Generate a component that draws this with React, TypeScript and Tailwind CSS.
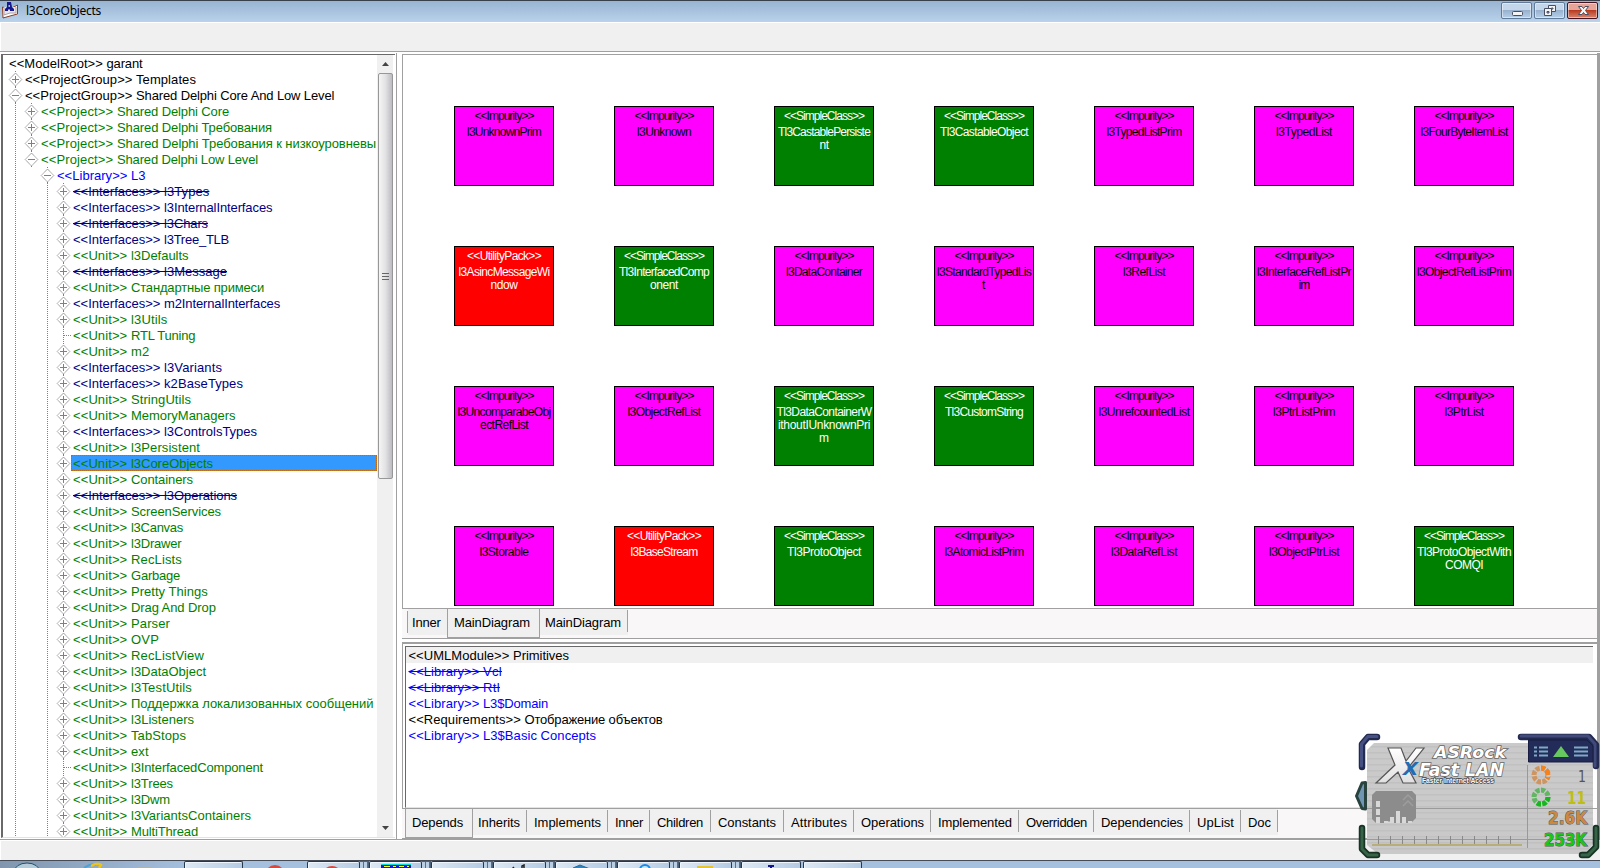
import React from "react";

type Kind = "black" | "green" | "blue" | "navy";
type Node = {
  level: number;
  kind: Kind;
  stereo: string;
  stereoWidth: number;
  name: string;
  width: number;
  icon?: "plus" | "minus" | "leaf";
  struck?: boolean;
  selected?: boolean;
};

const UI_FONT = "13px 'Liberation Sans'";
const measure = document.createElement("canvas").getContext("2d")!;

function Fit({ text, width, font = UI_FONT, className = "" }: { text: string; width: number; font?: string; className?: string }) {
  measure.font = font;
  const spacing = (width - measure.measureText(text).width) / text.length;
  return (
    <span className={"inline-block whitespace-pre align-top " + className} style={{ width, letterSpacing: spacing }}>
      {text}
    </span>
  );
}

const COLORS: Record<Kind, string> = {
  black: "text-black",
  green: "text-[#008000]",
  blue: "text-[#0000ff]",
  navy: "text-[#000080]",
};

const unit = (name: string, width: number, icon: "plus" | "leaf" = "plus", selected = false): Node => ({
  level: 4, kind: "green", stereo: "<<Unit>> ", stereoWidth: 58, name, width: width + 1, icon, selected,
});
const iface = (name: string, width: number, struck = false): Node => ({
  level: 4, kind: "navy", stereo: "<<Interfaces>> ", stereoWidth: 91, name, width: width + 1, icon: "plus", struck,
});
const project = (name: string, width: number, icon: "plus" | "minus" = "plus"): Node => ({
  level: 2, kind: "green", stereo: "<<Project>> ", stereoWidth: 76, name, width: width + 1, icon,
});
const group = (name: string, width: number, icon: "plus" | "minus"): Node => ({
  level: 1, kind: "black", stereo: "<<ProjectGroup>> ", stereoWidth: 111, name, width: width + 1, icon,
});

const TREE: Node[] = [
  { level: 0, kind: "black", stereo: "<<ModelRoot>> ", stereoWidth: 97.5, name: "garant", width: 36 },
  group("Templates", 59, "plus"),
  group("Shared Delphi Core And Low Level", 198, "minus"),
  project("Shared Delphi Core", 111),
  project("Shared Delphi Требования", 154),
  project("Shared Delphi Требования к низкоуровневы", 258),
  project("Shared Delphi Low Level", 140, "minus"),
  { level: 3, kind: "blue", stereo: "<<Library>> ", stereoWidth: 74, name: "L3", width: 14.5, icon: "minus" },
  iface("l3Types", 44.4, true),
  iface("l3InternalInterfaces", 107.4),
  iface("l3Chars", 43, true),
  iface("l3Tree_TLB", 64),
  unit("l3Defaults", 56.5),
  iface("l3Message", 62, true),
  unit("Стандартные примеси", 132),
  iface("m2InternalInterfaces", 115),
  unit("l3Utils", 35.5),
  unit("RTL Tuning", 64, "leaf"),
  unit("m2", 17.5),
  iface("l3Variants", 57),
  iface("k2BaseTypes", 78),
  unit("StringUtils", 59),
  unit("MemoryManagers", 103.5),
  iface("l3ControlsTypes", 92),
  unit("l3Persistent", 68),
  unit("l3CoreObjects", 81, "plus", true),
  unit("Containers", 61),
  iface("l3Operations", 72, true),
  unit("ScreenServices", 89),
  unit("l3Canvas", 51),
  unit("l3Drawer", 49.5),
  unit("RecLists", 50),
  unit("Garbage", 48),
  unit("Pretty Things", 76),
  unit("Drag And Drop", 84.5),
  unit("Parser", 38),
  unit("OVP", 27),
  unit("RecListView", 72),
  unit("l3DataObject", 74),
  unit("l3TestUtils", 60),
  unit("Поддержка локализованных сообщений", 241.5),
  unit("l3Listeners", 62),
  unit("TabStops", 54),
  unit("ext", 16.7),
  unit("l3InterfacedComponent", 131, "leaf"),
  unit("l3Trees", 41),
  unit("l3Dwm", 38),
  unit("l3VariantsContainers", 119),
  unit("MultiThread", 66),
];

type Shape = "I" | "S" | "U";
type Line = [string, number];
const BOXES: [Shape, ...Line[]][] = [
  ["I", ["l3UnknownPrim", 74]], ["I", ["l3Unknown", 54]], ["S", ["Tl3CastablePersiste", 92], ["nt", 9]], ["S", ["Tl3CastableObject", 88]],
  ["I", ["l3TypedListPrim", 75]], ["I", ["l3TypedList", 56]], ["I", ["l3FourByteItemList", 87]],
  ["U", ["l3AsincMessageWi", 91], ["ndow", 27]], ["S", ["Tl3InterfacedComp", 90], ["onent", 28]], ["I", ["l3DataContainer", 76]],
  ["I", ["l3StandardTypedLis", 94], ["t", 4]], ["I", ["l3RefList", 42]], ["I", ["l3InterfaceRefListPr", 94], ["im", 11]], ["I", ["l3ObjectRefListPrim", 94]],
  ["I", ["l3UncomparabeObj", 93], ["ectRefList", 48]], ["I", ["l3ObjectRefList", 73]],
  ["S", ["Tl3DataContainerW", 95], ["ithoutIUnknownPri", 92], ["m", 10]], ["S", ["Tl3CustomString", 78]],
  ["I", ["l3UnrefcountedList", 91]], ["I", ["l3PtrListPrim", 62]], ["I", ["l3PtrList", 39]],
  ["I", ["l3Storable", 49]], ["U", ["l3BaseStream", 67]], ["S", ["Tl3ProtoObject", 74]], ["I", ["l3AtomicListPrim", 79]],
  ["I", ["l3DataRefList", 66]], ["I", ["l3ObjectPtrList", 70]], ["S", ["Tl3ProtoObjectWith", 94], ["COMQI", 38]],
];
const SHAPES: Record<Shape, { label: string; width: number; cls: string }> = {
  I: { label: "<<Impurity>>", width: 59, cls: "bg-[#ff00ff] text-black" },
  S: { label: "<<SimpleClass>>", width: 80, cls: "bg-[#008000] text-white" },
  U: { label: "<<UtilityPack>>", width: 74, cls: "bg-[#ff0000] text-white" },
};
const BOX_FONT = "12px 'Liberation Sans'";

function Guide({ on }: { on: boolean }) {
  return (
    <svg width="16" height="16" className="shrink-0" shapeRendering="crispEdges">
      {on && <path d="M7.5 0V16" stroke="#808080" strokeDasharray="1 1" />}
    </svg>
  );
}

function Knob({ kind }: { kind: "plus" | "minus" | "leaf" }) {
  return (
    <svg width="16" height="16" className="shrink-0">
      {kind === "leaf" ? (
        <path d="M7.5 0V16M8 8.5H15" stroke="#808080" strokeDasharray="1 1" shapeRendering="crispEdges" />
      ) : (
        <>
          <path d="M7.5 0V2M7.5 15V16" stroke="#808080" strokeDasharray="1 1" />
          <path d="M7.5 2L13.8 8.5L7.5 15L1.2 8.5Z" fill="#fff" stroke="#777" strokeWidth="0.9" strokeDasharray="1.1 0.5" />
          <path d={kind === "plus" ? "M4 8.5H11M7.5 5V12" : "M4 8.5H11"} stroke="#808080" shapeRendering="crispEdges" />
        </>
      )}
    </svg>
  );
}

function TreeRow({ node }: { node: Node }) {
  const guides = node.level > 1 ? Array.from({ length: node.level - 1 }, (_, i) => i) : [];
  const strike = node.struck ? "line-through" : "";
  return (
    <div className="flex h-4 shrink-0 pl-[5px]">
      {guides.map((i) => (
        <Guide key={i} on={i !== 1} />
      ))}
      {node.icon && <Knob kind={node.icon} />}
      <div
        className={
          "h-4 flex-1 whitespace-pre " +
          COLORS[node.kind] +
          (node.selected ? " -ml-px border border-dotted border-[#cc6600] bg-[#3399ff] bg-clip-border pl-px leading-4" : " pl-px leading-[18px]")
        }
      >
        <Fit text={node.stereo} width={node.stereoWidth} className={strike} />
        <Fit text={node.name} width={node.width} className={strike} />
      </div>
    </div>
  );
}

type TabProps = { label: string; text: number; width: string; pad?: string; active?: boolean; divider?: boolean };
function Tab({ label, text, width, pad = "pl-[7px]", active = false, divider = true }: TabProps) {
  if (active)
    return (
      <div className={"flex h-[29px] shrink-0 items-center border border-t-0 border-[#a0a0a0] bg-[#f0f0f0] pb-px pl-1.5 " + width}>
        <Fit text={label} width={text} />
      </div>
    );
  return (
    <div className={"flex h-[26px] shrink-0 items-center justify-between bg-[#f0f0f0] pt-0.5 " + width + " " + pad}>
      <Fit text={label} width={text} />
      {divider && <span className="-mt-1 h-[22px] w-px shrink-0 bg-[#a0a0a0]" />}
    </div>
  );
}

const LOWER: TabProps[] = [
  { label: "Inherits", text: 42, width: "w-[54px]", pad: "pl-[5px]" },
  { label: "Implements", text: 67, width: "w-[81px]" },
  { label: "Inner", text: 28, width: "w-[42px]" },
  { label: "Children", text: 46, width: "w-[61px]" },
  { label: "Constants", text: 58, width: "w-[73px]" },
  { label: "Attributes", text: 56, width: "w-[70px]" },
  { label: "Operations", text: 63, width: "w-[77px]" },
  { label: "Implemented", text: 74, width: "w-[88px]" },
  { label: "Overridden", text: 61, width: "w-[75px]" },
  { label: "Dependencies", text: 82, width: "w-[96px]" },
  { label: "UpList", text: 37, width: "w-[51px]" },
  { label: "Doc", text: 23, width: "w-[37px]" },
];

const RELATIONS: { stereo: string; sw: number; name: string; w: number; cls: string; strike?: string }[] = [
  { stereo: "<<UMLModule>> ", sw: 104.5, name: "Primitives", w: 56, cls: "bg-[#f0f0f0]" },
  { stereo: "<<Library>> ", sw: 74.5, name: "Vcl", w: 19, cls: "text-[#0000ff]", strike: "line-through" },
  { stereo: "<<Library>> ", sw: 74.5, name: "Rtl", w: 17, cls: "text-[#0000ff]", strike: "line-through" },
  { stereo: "<<Library>> ", sw: 74.5, name: "L3$Domain", w: 65, cls: "text-[#0000ff]" },
  { stereo: "<<Requirements>> ", sw: 116, name: "Отображение объектов", w: 138, cls: "" },
  { stereo: "<<Library>> ", sw: 74.5, name: "L3$Basic Concepts", w: 113, cls: "text-[#0000ff]" },
];

function TitleButton({ kind }: { kind: "min" | "restore" | "close" }) {
  const red = kind === "close";
  return (
    <div
      className={
        "flex h-[17px] w-[31px] items-center justify-center rounded-[2px] border shadow-[inset_0_0_0_1px_rgba(255,255,255,0.45)] " +
        (red
          ? "border-[#431422] bg-linear-to-b from-[#e6a598] from-50% via-[#b83a20] via-50% to-[#d8836c]"
          : "border-[#5f7a9b] bg-linear-to-b from-[#c3d6ea] from-50% via-[#97b1cf] via-50% to-[#b7d0e9]")
      }
    >
      <svg width="16" height="15" viewBox="0 0 16 15" fill="#f4f4f4" stroke="#484f62">
        {kind === "min" && <rect x="3.5" y="8.5" width="10" height="4" rx="1" />}
        {kind === "restore" && (
          <>
            <path fillRule="evenodd" d="M6.5 2.5h7v6h-7zM9.5 5h1.500v1h-1.500z" />
            <path fillRule="evenodd" d="M2.500 5.500h7v7h-7zM5 8.500h2v1.500h-2z" />
          </>
        )}
        {kind === "close" && <path d="M3.500 3.500h3.500l1.500 2 1.500-2h3.500l-3 4 3 4h-3.500l-1.500-2-1.500 2h-3.500l3-4z" />}
      </svg>
    </div>
  );
}

function Ring({ cy, base, bright, from }: { cy: number; base: string; bright: string; from: number }) {
  return (
    <g fill="none" strokeWidth="5" transform={`rotate(${from} 191 ${cy})`}>
      <circle cx="191" cy={cy} r="7" stroke={base} pathLength="80" strokeDasharray="7.5 2.5" />
      <circle cx="191" cy={cy} r="7" stroke={bright} pathLength="80" strokeDasharray="7.5 2.5 7.5 2.5 7.5 52.5" />
    </g>
  );
}

function Widget() {
  return (
    <svg className="absolute left-[1350px] top-[730px]" width="250" height="134" viewBox="0 0 250 134">
      <defs>
        <pattern id="lines" width="4" height="6" patternUnits="userSpaceOnUse">
          <rect width="4" height="6" fill="#c8c8c8" />
          <rect y="4" width="4" height="1.500" fill="#bfbfbf" />
        </pattern>
        <linearGradient id="x" x1="0" y1="0" x2="0" y2="1">
          <stop offset="0" stopColor="#fff" />
          <stop offset="1" stopColor="#e0e0e0" />
        </linearGradient>
      </defs>
      <path d="M24 13H232L243 22V114L235 124H28L17 115V20Z" fill="url(#lines)" opacity="0.97" />
      <path d="M17 78.500H243M17 109.500H243" stroke="#8f8f8f" strokeWidth="0.8" />
      <path d="M177.500 35V118" stroke="#999" />
      <path d="M27 7H18L12 14V37" fill="none" stroke="#232a50" strokeWidth="6.500" strokeLinecap="round" strokeLinejoin="round" />
      <path d="M27 6.500H18L11.500 14V36" fill="none" stroke="#465082" strokeWidth="3" strokeLinecap="round" />
      <path d="M171 7H239L246 15V36" fill="none" stroke="#232a50" strokeWidth="6.500" strokeLinecap="round" strokeLinejoin="round" />
      <path d="M171 6H238L245 14V36" fill="none" stroke="#414a7a" strokeWidth="3" strokeLinecap="round" />
      <path d="M178.500 10H237L243 16V32H178.500Z" fill="#232c58" stroke="#171d40" />
      <path d="M184 17.500H187M189 17.500H198M184 21.500H187M189 21.500H198M184 25.500H187M189 25.500H198M224 17.500H238M224 21.500H238M224 25.500H238" stroke="#80a8c8" strokeWidth="2" />
      <path d="M211 16L219 27H203Z" fill="#68c860" />
      <path d="M12 98V119L18 125H27" fill="none" stroke="#173324" strokeWidth="6.500" strokeLinecap="round" strokeLinejoin="round" />
      <path d="M12 98V119L18 125H27" fill="none" stroke="#376347" strokeWidth="3" strokeLinecap="round" />
      <path d="M246 98V117L238 125H232" fill="none" stroke="#173324" strokeWidth="6.500" strokeLinecap="round" strokeLinejoin="round" />
      <path d="M246 98V117L238 125H232" fill="none" stroke="#376347" strokeWidth="3" strokeLinecap="round" />
      <path d="M15.500 52.500V79L12 78.500L6.500 66L12 53Z" fill="#7196b4" stroke="#28433e" strokeWidth="3" strokeLinejoin="round" />
      <path d="M38 18H51L56 31L66 18H74L58 38L66 53H53L48 42L36 53H26L45 35Z" fill="url(#x)" stroke="#555" strokeWidth="1.200" />
      <text x="53" y="45" fontFamily="Liberation Sans" fontWeight="bold" fontStyle="italic" fontSize="23" fill="#1f6db4" textLength="15" lengthAdjust="spacingAndGlyphs">x</text>
      <g fontFamily="DejaVu Sans" fontWeight="bold" fontStyle="italic" fill="#fff" stroke="#666" paintOrder="stroke" strokeWidth="1.600">
        <text x="84" y="28" fontSize="16" textLength="72" lengthAdjust="spacingAndGlyphs">ASRock</text>
        <text x="69" y="45.500" fontSize="18" textLength="85" lengthAdjust="spacingAndGlyphs">Fast LAN</text>
      </g>
      <text x="72" y="53" fontFamily="Liberation Sans" fontWeight="bold" fill="#fff" stroke="#444" paintOrder="stroke" strokeWidth="1.600" fontSize="7.500" textLength="72" lengthAdjust="spacingAndGlyphs">Faster Internet Access</text>
      <path d="M26 61H62L66 65V88L61 93H26L22 89V65Z" fill="#8c8c8c" />
      <path d="M26 71h4v6h-4zM26 79h4v6h-4zM26 87h4v6h-4zM34 91h4v2h-4zM38 91.500h3v1.500h-3zM40 87h4v6h-4zM46 81h4v12h-4zM52 87h4v6h-4zM58 91h4v2h-4z" fill="#d8d8d8" />
      <path d="M53 70l5-5 5 5M53 76l5-5 5 5" fill="none" stroke="#9d9d9d" strokeWidth="1.500" />
      <path d="M28.500 106v8M40.500 106v8M52.500 106v8M64.500 106v8M76.500 106v8M88.500 106v8M100.500 106v8M112.500 106v8M124.500 106v8M136.500 106v8M148.500 106v8M160.500 106v8" stroke="#888" />
      <path d="M22 115H172" stroke="#b1a560" strokeWidth="1.500" />
      <Ring cy={45} base="#cf9560" bright="#f5821a" from={-90} />
      <Ring cy={67} base="#62b562" bright="#14b81e" from={0} />
      <g fontFamily="DejaVu Sans" textAnchor="end" fontSize="17">
        <text x="236" y="52" fontSize="16" fill="#555" textLength="8" lengthAdjust="spacingAndGlyphs">1</text>
        <text x="236" y="74" fill="#bebe10" fontWeight="bold" textLength="19" lengthAdjust="spacingAndGlyphs">11</text>
        <g fontWeight="bold" stroke="#555" strokeWidth="1" paintOrder="stroke">
          <text x="237" y="94" fill="#cc8840" textLength="39" lengthAdjust="spacingAndGlyphs">2.6K</text>
          <text x="237" y="116" fill="#18c814" textLength="43" lengthAdjust="spacingAndGlyphs">253K</text>
        </g>
      </g>
    </svg>
  );
}

function TaskButton({ width, children, stack }: { width: string; children?: React.ReactNode; stack?: boolean }) {
  return (
    <div className={"flex h-full shrink-0 " + width}>
      <div className="flex flex-1 justify-center rounded-t-[2px] border border-b-0 border-[#26384c] bg-linear-to-r from-[#dde8f4] to-[#b5cbe3] pt-0.5 shadow-[inset_1px_1px_0_#eef5fc]">
        <svg width="30" height="5" className="overflow-hidden">{children}</svg>
      </div>
      {stack && <div className="w-[9px] border-r border-t border-[#4a6078] bg-[repeating-linear-gradient(90deg,#b9cde3_0_3px,#55708e_3px_4px)]" />}
    </div>
  );
}

export default function App() {
  return (
    <div className="relative flex h-[868px] w-[1600px] flex-col overflow-hidden bg-white font-['Liberation_Sans',sans-serif] text-[13px] leading-4 text-black">
      <header className="flex h-[22px] shrink-0 border-t border-[#38404c] bg-linear-to-b from-[#98b4d2] to-[#bad2eb] pl-0.5">
        <svg width="16" height="18" viewBox="0 0 16 18">
          <path d="M0.500 6L8 8L15.500 4V13L8 15L1 17Z" fill="#fff" stroke="#8a3b22" />
          <path d="M2 6V14L8 12L14 12V6" fill="#e8e4ef" stroke="#b0a0a0" />
          <path fillRule="evenodd" d="M5 1H9L10 6L12 8V10H8V8.500H6V10H3V8L5 6ZM6.500 4V6H8V4Z" fill="#14188c" />
        </svg>
        <div className="ml-2 mt-[2px] font-['Noto_Sans',sans-serif] text-[12px]">
          <Fit text="l3CoreObjects" width={75} font="12px 'Noto Sans'" />
        </div>
        <div className="ml-auto mr-[2px] mt-px flex gap-0.5">
          <TitleButton kind="min" />
          <TitleButton kind="restore" />
          <TitleButton kind="close" />
        </div>
      </header>
      <div className="ml-px mt-px h-7 shrink-0 bg-[#f0f0f0]" />
      <div className="h-px shrink-0 bg-[#a0a0a0]" />
      <div className="mt-px flex h-[787px] shrink-0 border-b border-[#a0a0a0]">
        <aside className="ml-px flex w-[396px] shrink-0 border-r border-[#a0a0a0] pr-px pt-px">
          <div className="flex h-[784px] flex-1 overflow-hidden border-b border-l-2 border-t border-b-[#e3e3e3] border-l-[#696969] border-t-[#696969]">
            <div className="flex w-[374px] shrink-0 flex-col">
              {TREE.map((n, i) => (
                <TreeRow key={i} node={n} />
              ))}
            </div>
            <div className="flex w-4 shrink-0 flex-col items-center bg-[#f0f0f0]">
              <svg width="16" height="18"><path d="M5 11H12L8.500 7Z" fill="#444" /></svg>
              <div className="flex h-[406px] w-[15px] items-center justify-center rounded-[2px] border border-[#979797] bg-linear-to-r from-[#f5f5f5] via-[#e2e2e4] to-[#bcbcc2]">
                <svg width="7" height="9"><path d="M0 1.500H7M0 4.500H7M0 7.500H7" stroke="#666" /></svg>
              </div>
              <svg width="16" height="18" className="mt-auto"><path d="M5 7H12L8.500 11Z" fill="#444" /></svg>
            </div>
          </div>
        </aside>
        <main className="ml-[5px] flex w-[1195px] shrink-0 flex-col">
          <section className="mt-px h-[555px] shrink-0 overflow-hidden border border-r-0 border-[#a0a0a0] pl-[51px] pt-[51px]">
            <div className="grid w-[1120px] grid-cols-7 gap-y-[60px]">
              {BOXES.map(([shape, ...lines], i) => (
                <div key={i} className={"h-20 w-[100px] border border-black pt-px text-center text-[12px] " + SHAPES[shape].cls}>
                  <div className="h-4 leading-4">
                    <Fit text={SHAPES[shape].label} width={SHAPES[shape].width} font={BOX_FONT} />
                  </div>
                  {lines.map(([text, width], k) => (
                    <div key={k} className="h-[13px] leading-[17px]">
                      <Fit text={text} width={width} font={BOX_FONT} />
                    </div>
                  ))}
                </div>
              ))}
            </div>
          </section>
          <nav className="flex h-[29px] shrink-0 bg-[#f9f7f8] pl-[5px]">
            <div className="mt-0.5 h-[22px] w-px bg-[#a0a0a0]" />
            <Tab label="Inner" text={28.5} width="w-[39px]" pad="pl-1" divider={false} />
            <Tab label="MainDiagram" text={76} width="w-[93px]" active />
            <Tab label="MainDiagram" text={76} width="w-[88px]" pad="pl-[5px]" />
          </nav>
          <div className="h-[5px] shrink-0 border-y border-[#a0a0a0] bg-white" />
          <section className="h-[166px] shrink-0 border-b border-l border-t border-[#a0a0a0] pl-0.5 pt-0.5">
            <div className="mr-1 h-[162px] border-b border-l border-t border-[#696969] border-b-[#e3e3e3] border-t-[#696969] bg-white">
              {RELATIONS.map((r) => (
                <div key={r.name} className={"h-4 pl-[2.5px] leading-[18px] " + r.cls}>
                  <Fit text={r.stereo} width={r.sw} className={r.strike} />
                  <Fit text={r.name} width={r.w} className={r.strike} />
                </div>
              ))}
            </div>
          </section>
          <nav className="flex h-[29px] shrink-0 bg-[#f9f7f8] pl-[3px]">
            <Tab label="Depends" text={51} width="w-[68px]" active />
            {LOWER.map((t) => (
              <Tab key={t.label} {...t} />
            ))}
          </nav>
          <div className="h-px bg-[#a0a0a0]" />
        </main>
        <div className="w-[3px] bg-[#a0a0a0]" />
      </div>
      <div className="ml-px mt-px h-[19px] shrink-0 bg-[#f0f0f0]" />
      <footer className="flex h-2 shrink-0 border-t border-[#454c58] bg-linear-to-r from-[#8196ae] via-[#a5c0df] via-12% to-[#a5c0df]">
        <svg width="184" height="7" className="shrink-0">
          <ellipse cx="27" cy="11" rx="13" ry="9" fill="#b4cbd9" stroke="#24546a" />
          <path d="M84 7Q90 2 96 4" fill="none" stroke="#4aa4d8" strokeWidth="2" />
          <path d="M91 5Q98 1 101 4L99 7" fill="none" stroke="#edc41c" strokeWidth="2.500" />
          <rect x="138" y="6" width="14" height="2" fill="#d6b060" />
        </svg>
        <TaskButton width="w-[59px]" />
        <svg width="64" height="7" className="shrink-0"><circle cx="32" cy="14" r="10" fill="#d8493c" /></svg>
        <TaskButton width="w-[62px]" stack><circle cx="13" cy="12" r="10" fill="#d8493c" /></TaskButton>
        <TaskButton width="w-[62px]" stack>
          <path d="M0 3H30" stroke="#1616d0" strokeWidth="8" />
          <path d="M0 0.500H30" stroke="#00e0e0" />
          <path d="M3 2.500H9M12 2.500H15M18 2.500H23M26 2.500H28" stroke="#ff0" />
        </TaskButton>
        <TaskButton width="w-[62px]" stack><rect y="4" width="30" height="1" fill="#808894" /></TaskButton>
        <TaskButton width="w-[62px]" stack><path d="M7 5L9 3M17 5V2L19 1V5" fill="none" stroke="#222" strokeWidth="1.500" /></TaskButton>
        <TaskButton width="w-[62px]" stack><path d="M6 4L13 1L23 5" fill="#3383b8" stroke="#256a9c" /></TaskButton>
        <TaskButton width="w-[62px]" stack><circle cx="16" cy="6" r="5" fill="#c8eaff" stroke="#1a8ae8" strokeWidth="2" /></TaskButton>
        <TaskButton width="w-[62px]" stack><path d="M6 2H22V5H6Z" fill="#e5c434" /></TaskButton>
        <TaskButton width="w-[60px]"><path d="M12 2H18M15 2V5" stroke="#141490" strokeWidth="2" /></TaskButton>
        <div className="w-[2px]" />
        <TaskButton width="w-[59px]"><rect y="4" width="30" height="1" fill="#808894" /></TaskButton>
      </footer>
      <Widget />
    </div>
  );
}
